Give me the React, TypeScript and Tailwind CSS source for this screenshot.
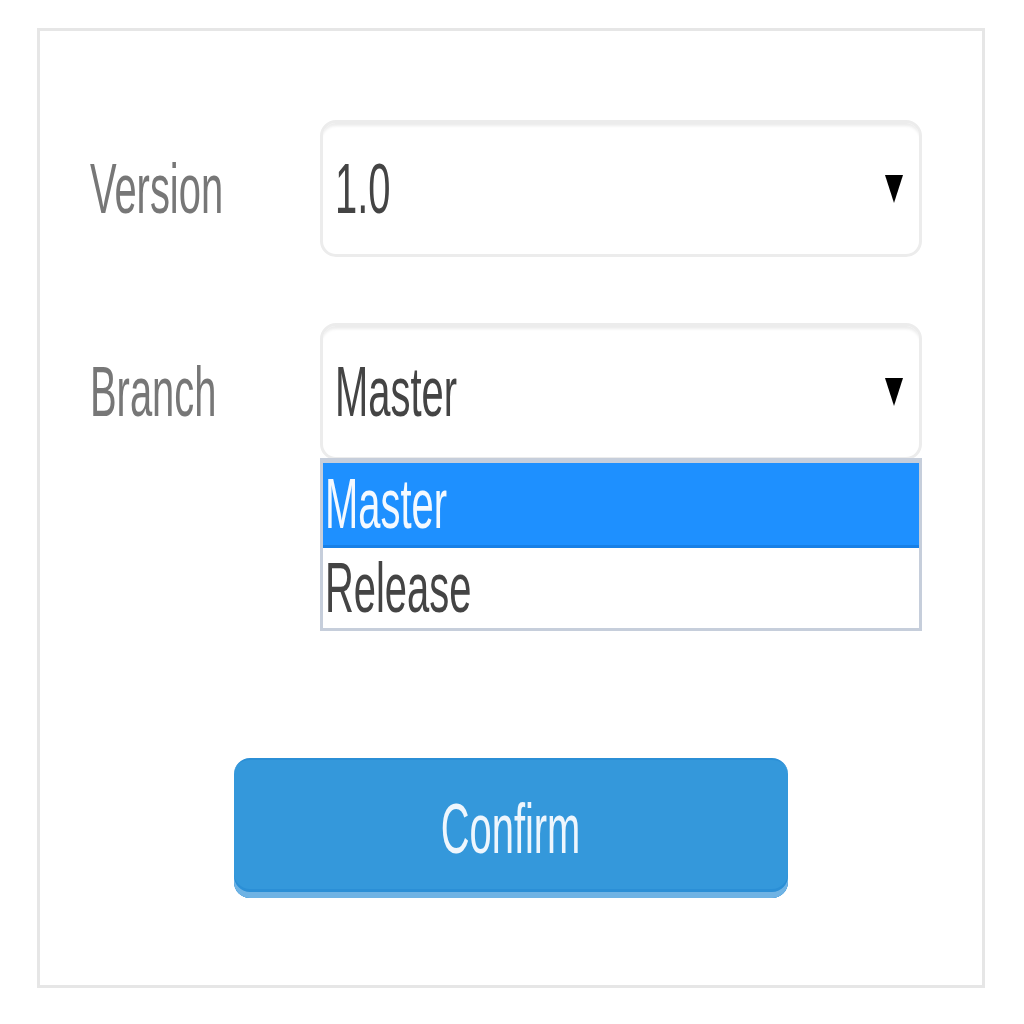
import React from 'react';

const font = { fontFamily: '"Liberation Sans", Arial, sans-serif' };

// Condensed-looking text: wide font squeezed horizontally
function Txt({ children, className = '' }: { children: React.ReactNode; className?: string }) {
  return (
    <span className={`inline-block origin-left scale-x-[0.57] text-[70px] leading-none ${className}`}>
      {children}
    </span>
  );
}

function Caret() {
  return (
    <svg width="18" height="28" viewBox="0 0 18 28" className="shrink-0">
      <polygon points="0,0 18,0 9,28" fill="#000" />
    </svg>
  );
}

function SelectBox({ value }: { value: string }) {
  return (
    <div className="flex h-[137px] items-center justify-between overflow-hidden rounded-[16px] border-[3px] border-[#ececec] bg-white pl-[12px] pr-[16px] shadow-[inset_0_5px_3px_-2px_#ececec]">
      <Txt className="text-[#444]">{value}</Txt>
      <Caret />
    </div>
  );
}

export default function App() {
  return (
    <div className="h-[1024px] w-[1024px] bg-white pl-[37px] pt-[28px]" style={font}>
      <div className="flex h-[960px] w-[948px] flex-col border-[3.5px] border-[#e6e6e6] pl-[50px] pr-[60px] pt-[89px]">
        {/* Version */}
        <div className="flex items-center">
          <div className="w-[230px] shrink-0">
            <Txt className="text-[#777]">Version</Txt>
          </div>
          <div className="flex-1">
            <SelectBox value="1.0" />
          </div>
        </div>

        {/* Branch */}
        <div className="mt-[66px] flex items-start">
          <div className="flex h-[137px] w-[230px] shrink-0 items-center">
            <Txt className="text-[#777]">Branch</Txt>
          </div>
          <div className="flex-1">
            <SelectBox value="Master" />
            <div className="-mt-[2px] border-[3px] border-t-[5px] border-[#c6cedb] bg-white">
              <div className="flex h-[85px] items-center border-b-[3px] border-[#1880e6] bg-[#1e90ff] pl-[2px]">
                <Txt className="text-[#f4f9ff]">Master</Txt>
              </div>
              <div className="flex h-[80px] items-center pl-[2px]">
                <Txt className="text-[#444]">Release</Txt>
              </div>
            </div>
          </div>
        </div>

        {/* Confirm */}
        <div className="mt-[127px] flex justify-center pl-[10px]">
          <button className="flex h-[140px] w-[554px] items-center justify-center rounded-[16px] border-t-2 border-[#2b8fd6] bg-[#3498db] shadow-[inset_0_-6px_0_#6fb3e4,inset_0_-9px_0_#2b8fd6]">
            <span className="inline-block origin-center scale-x-[0.57] text-[70px] leading-none text-[#eef6fd]">
              Confirm
            </span>
          </button>
        </div>
      </div>
    </div>
  );
}
